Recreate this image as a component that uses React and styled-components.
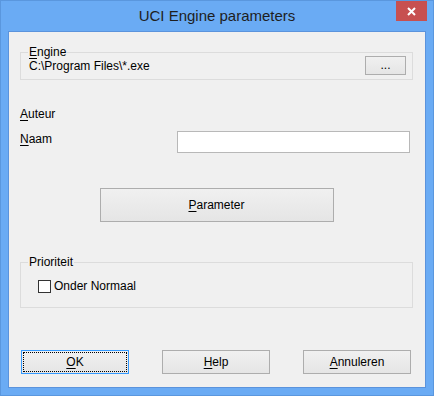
import React from 'react';
import styled, { createGlobalStyle } from 'styled-components';

const GlobalStyle = createGlobalStyle`
  html, body {
    margin: 0;
    padding: 0;
    background: #6aabf4;
  }
  body {
    font-family: "Liberation Sans", Arial, sans-serif;
  }
`;

export default function App() {
  return (
    <>
      <GlobalStyle />
      <Window>
        <TitleBar>
          <Title>UCI Engine parameters</Title>
          <CloseButton>
            <svg width="9" height="9" viewBox="0 0 9 9">
              <path d="M1 1 L8 8 M8 1 L1 8" stroke="#fff" strokeWidth="2" />
            </svg>
          </CloseButton>
        </TitleBar>
        <Client>
          <GroupBox $padding="3px 6px 4px 8px">
            <Caption><AccessKey>E</AccessKey>ngine</Caption>
            <EngineRow>
              <PathText>C:\Program Files\*.exe</PathText>
              <Button $width="41px" $height="19px">...</Button>
            </EngineRow>
          </GroupBox>

          <Label $top="27px"><AccessKey>A</AccessKey>uteur</Label>

          <FieldRow>
            <Label><AccessKey>N</AccessKey>aam</Label>
            <TextInput />
          </FieldRow>

          <ParameterButton $width="234px" $height="34px">
            <AccessKey>P</AccessKey>arameter
          </ParameterButton>

          <GroupBox $top="40px" $padding="16px 6px 13px 17px">
            <Caption>Prioriteit</Caption>
            <CheckRow>
              <CheckBox />
              <span>Onder Normaal</span>
            </CheckRow>
          </GroupBox>

          <ButtonRow>
            <Button $width="108px" $height="24px" $focused>
              <AccessKey>O</AccessKey>K
            </Button>
            <Button $width="108px" $height="24px">
              <AccessKey>H</AccessKey>elp
            </Button>
            <Button $width="108px" $height="24px">
              <AccessKey>A</AccessKey>nnuleren
            </Button>
          </ButtonRow>
        </Client>
      </Window>
    </>
  );
}

const Window = styled.div`
  width: 434px;
  height: 396px;
  box-sizing: border-box;
  border: 1px solid #5a97de;
  background: #6aabf4;
  display: flex;
  flex-direction: column;
  padding: 0 7px 7px 7px;
`;

const TitleBar = styled.div`
  height: 30px;
  display: flex;
  justify-content: center;
  align-items: center;
  position: relative;
`;

const Title = styled.div`
  font-size: 15px;
  color: #1e1e1e;
  margin-top: -1px;
`;

const CloseButton = styled.div`
  position: absolute;
  top: 0;
  right: -1px;
  width: 31px;
  height: 20px;
  background: #c75050;
  display: flex;
  align-items: center;
  justify-content: center;
`;

const Client = styled.div`
  flex: 1;
  background: #f0f0f0;
  border: 1px solid #5b93dc;
  display: flex;
  flex-direction: column;
  padding: 20px 12px 0 11px;
  font-size: 12px;
  color: #000;
`;

const AccessKey = styled.u`
  text-decoration-thickness: 1px;
  text-underline-offset: 2px;
`;

const GroupBox = styled.div`
  position: relative;
  border: 1px solid #dcdcdc;
  margin-top: ${props => props.$top || 0};
  padding: ${props => props.$padding};
`;

const Caption = styled.span`
  position: absolute;
  top: -8px;
  left: 7px;
  padding: 0 1px;
  background: #f0f0f0;
  line-height: 15px;
`;

const EngineRow = styled.div`
  display: flex;
  align-items: center;
  justify-content: space-between;
`;

const PathText = styled.span`
  line-height: 15px;
  padding-top: 2px;
`;

const Button = styled.div`
  box-sizing: border-box;
  width: ${props => props.$width};
  height: ${props => props.$height};
  border: 1px solid ${props => (props.$focused ? '#3399ff' : '#adadad')};
  background: linear-gradient(#f0f0f0, #e5e5e5);
  display: flex;
  align-items: center;
  justify-content: center;
  line-height: 15px;
  outline: ${props => (props.$focused ? '1px dotted #000' : 'none')};
  outline-offset: -3px;
`;

const ParameterButton = styled(Button)`
  align-self: center;
  margin-top: 35px;
`;

const Label = styled.div`
  line-height: 15px;
  margin-top: ${props => props.$top || 0};
`;

const FieldRow = styled.div`
  display: flex;
  margin-top: 9px;
  & > ${Label} {
    width: 157px;
    padding-top: 1px;
  }
`;

const TextInput = styled.div`
  box-sizing: border-box;
  width: 233px;
  height: 22px;
  background: #fff;
  border: 1px solid #b8b8b8;
`;

const CheckRow = styled.div`
  display: flex;
  align-items: center;
  gap: 3px;
  line-height: 15px;
`;

const CheckBox = styled.div`
  box-sizing: border-box;
  width: 13px;
  height: 13px;
  border: 1px solid #333;
  background: #fff;
`;

const ButtonRow = styled.div`
  display: flex;
  justify-content: space-between;
  margin-top: 42px;
  padding: 0 2px 0 1px;
`;
